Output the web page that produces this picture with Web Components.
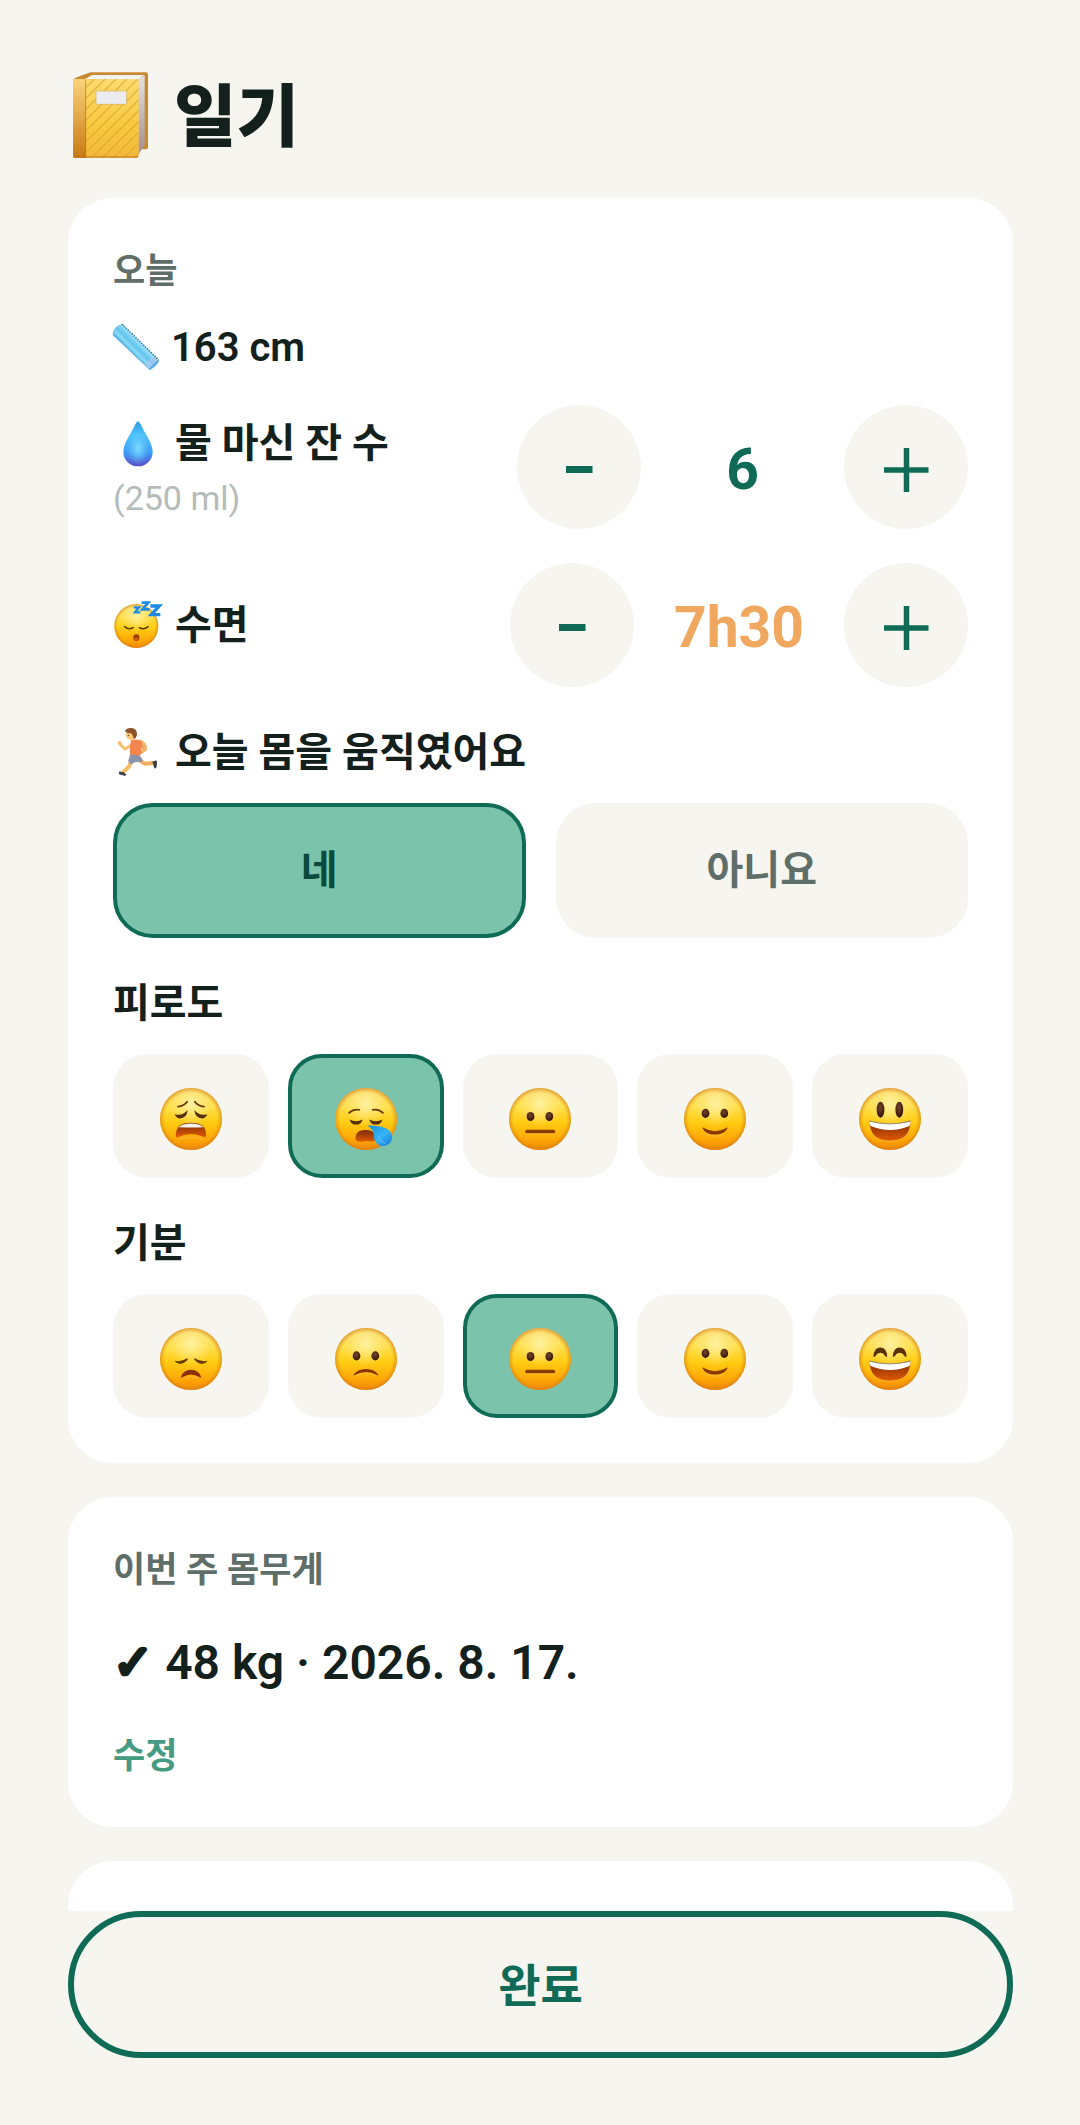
<!DOCTYPE html>
<html lang="ko">
<head>
<meta charset="utf-8">
<meta name="viewport" content="width=device-width, initial-scale=1">
<title>일기</title>
<style>
  :root {
    --bg: #f6f5f0;
    --card: #ffffff;
    --ink: #13201c;
    --muted: #5f6e68;
    --faint: #b4bcb9;
    --green: #0f6b55;
    --green-dark: #0a4b3b;
    --green-soft: #7cc3ab;
    --link: #459a82;
    --orange: #f0a860;
  }
  body {
    margin: 0;
    background: var(--bg);
    color: var(--ink);
    font-family: Roboto, "Noto Sans CJK KR", "DejaVu Sans", sans-serif;
    font-size: 40px;
    line-height: 56px;
  }
</style>
</head>
<body>
<diary-app>
  <diary-title slot="header" icon="book">일기</diary-title>

  <diary-card heading="오늘">
    <diary-label icon="ruler">163 cm</diary-label>
    <diary-steppers>
      <diary-stepper icon="drop" label="물 마신 잔 수" note="(250 ml)" value="6"></diary-stepper>
      <diary-stepper icon="sleeping" label="수면" value="7h30" tone="warn"></diary-stepper>
    </diary-steppers>
    <diary-field>
      <diary-label slot="label" icon="runner">오늘 몸을 움직였어요</diary-label>
      <diary-choices options="네,아니요" selected="0"></diary-choices>
    </diary-field>
    <diary-field>
      <diary-label slot="label">피로도</diary-label>
      <diary-moods icons="weary,sleepy,neutral,smile,happy" selected="1"></diary-moods>
    </diary-field>
    <diary-field>
      <diary-label slot="label">기분</diary-label>
      <diary-moods icons="sad,frown,neutral,smile,grin" selected="2"></diary-moods>
    </diary-field>
  </diary-card>

  <diary-card heading="이번 주 몸무게">
    <diary-weight edit="수정">48 kg · 2026. 8. 17.</diary-weight>
  </diary-card>

  <diary-card></diary-card>

  <diary-done slot="footer">완료</diary-done>
</diary-app>

<script>
// ========================================
// ICONS
// ========================================

// Shared yellow head, drawn on a 64x64 grid
const FACE_DEFS = `
  <defs>
    <linearGradient id="skin" x1="0" y1="0" x2="0" y2="1">
      <stop offset="0" stop-color="#fcdc6e"/>
      <stop offset=".3" stop-color="#ffe04e"/>
      <stop offset=".55" stop-color="#ffcc12"/>
      <stop offset=".8" stop-color="#fdab08"/>
      <stop offset="1" stop-color="#f58a06"/>
    </linearGradient>
    <radialGradient id="shine" cx=".5" cy=".26" r=".36">
      <stop offset="0" stop-color="#fff2a4"/>
      <stop offset="1" stop-color="#ffea80" stop-opacity="0"/>
    </radialGradient>
    <radialGradient id="rim" cx=".5" cy=".5" r=".5">
      <stop offset=".84" stop-color="#e08e14" stop-opacity="0"/>
      <stop offset="1" stop-color="#cf7414" stop-opacity=".6"/>
    </radialGradient>
    <linearGradient id="mouth" x1="0" y1="0" x2="0" y2="1">
      <stop offset="0" stop-color="#7c2a04"/>
      <stop offset="1" stop-color="#e25a06"/>
    </linearGradient>
    <radialGradient id="eye" cx=".45" cy=".35" r=".6">
      <stop offset="0" stop-color="#74452a"/>
      <stop offset="1" stop-color="#38170a"/>
    </radialGradient>
    <linearGradient id="tear" x1="0" y1="0" x2="1" y2="1">
      <stop offset="0" stop-color="#1a8fe0"/>
      <stop offset=".55" stop-color="#35b4f8"/>
      <stop offset="1" stop-color="#1577d2"/>
    </linearGradient>
  </defs>`;

const HEAD = `
  <circle cx="32" cy="32" r="32" fill="url(#skin)"/>
  <circle cx="32" cy="32" r="32" fill="url(#shine)"/>
  <circle cx="32" cy="32" r="32" fill="url(#rim)"/>`;

const face = (features) => `<svg viewBox="0 0 64 64" aria-hidden="true">${FACE_DEFS}${HEAD}${features}</svg>`;

const dots = (y, rx = 4, ry = 4.7) => `
  <ellipse cx="22.2" cy="${y}" rx="${rx}" ry="${ry}" fill="url(#eye)"/>
  <ellipse cx="41.6" cy="${y}" rx="${rx}" ry="${ry}" fill="url(#eye)"/>`;

const OPEN_SMILE = `
  <path d="M10.6 33.6Q32 39.6 53.4 33.6Q53.6 54.8 32 54.8Q10.4 54.8 10.6 33.6Z" fill="url(#mouth)" stroke="#ffc53d" stroke-width=".8"/>
  <path d="M10.9 34.2Q32 39.8 53.1 34.2Q53 37 52 39.2Q32 47.6 12 39.2Q11 37 10.9 34.2Z" fill="#fff"/>
  <path d="M10.9 34.2Q32 40 53.1 34.2" fill="none" stroke="#8a8a5a" stroke-width=".9"/>`;

const ICONS = {
  weary: face(`
    <g fill="none" stroke="#6b3a08" stroke-width="1.9" stroke-linecap="round">
      <path d="M18.6 19.2Q25 18.6 28 14.2"/><path d="M45.4 19.2Q39 18.6 36 14.2"/>
    </g>
    <g fill="#55300a">
      <path d="M15 27Q23 29.6 28.6 22.8Q27.6 31.4 20.6 31.4Q17 31.2 15 27Z"/>
      <path d="M49 27Q41 29.6 35.4 22.8Q36.4 31.4 43.4 31.4Q47 31.2 49 27Z"/>
    </g>
    <path d="M16.4 49.6Q15.6 35.8 32 35.8Q48.4 35.8 47.6 49.6Q47 51.8 44.6 50.2Q32 44.8 19.4 50.2Q17 51.8 16.4 49.6Z" fill="url(#mouth)"/>
    <path d="M19.2 40.6Q23 36.6 32 36.6Q41 36.6 44.8 40.6Q32 41.2 19.2 40.6Z" fill="#f4f2ee"/>
    <path d="M20 53Q32 48.4 44 53" fill="none" stroke="#ffb43c" stroke-width="1.2"/>`),

  sleepy: face(`
    <g fill="none" stroke="#6b3a08" stroke-width="1.9" stroke-linecap="round">
      <path d="M14.6 25.6Q19 21.6 25 22.6"/><path d="M49.4 25.6Q45 21.6 39 22.6"/>
    </g>
    <g fill="#55300a">
      <path d="M15 32.4Q21.8 36 28.6 32.4Q27 37.8 21.8 37.8Q16.6 37.8 15 32.4Z"/>
      <path d="M35.4 32.4Q42.2 36 49 32.4Q47.4 37.8 42.2 37.8Q37 37.8 35.4 32.4Z"/>
    </g>
    <path d="M21.2 53Q20.6 43.4 32 43.4Q42 43.4 42.8 53Q42 56 32 54.8Q22 56.8 21.2 53Z" fill="url(#mouth)"/>
    <path d="M33.4 38.8Q45 38.6 52.6 41.6Q59 45 59 51A9.4 9.4 0 0 1 40.4 52.4Q40.6 43 33.4 38.8Z" fill="url(#tear)"/>
    <path d="M45 49Q46 56 52 57" fill="none" stroke="#7fd6ff" stroke-width="1.2" opacity=".6"/>`),

  neutral: face(`${dots(29.4)}
    <rect x="16.8" y="43" width="30.8" height="3.8" rx="1.6" fill="#8a3a06"/>
    <path d="M18 47.6H46.4" stroke="#ffb83a" stroke-width="1"/>`),

  smile: face(`${dots(26.2)}
    <path d="M19 41.2Q20 40.4 21 41.6Q32 47.6 43 41.6Q44 40.4 45 41.2Q42 48 32 48Q22 48 19 41.2Z" fill="#8a3a06"/>
    <path d="M23 48Q32 51.4 41 48" fill="none" stroke="#ffbf40" stroke-width="1"/>`),

  happy: face(`${dots(22.4, 4, 8.2)}${OPEN_SMILE}`),

  grin: face(`
    <g fill="#5a3008">
      <path d="M14.8 29.4Q15.6 20 22 20Q28.4 20 29.2 29.4Q28 30.2 27 28.8Q25 25.6 22 25.6Q19 25.6 17 28.8Q16 30.2 14.8 29.4Z"/>
      <path d="M34.8 29.4Q35.6 20 42 20Q48.4 20 49.2 29.4Q48 30.2 47 28.8Q45 25.6 42 25.6Q39 25.6 37 28.8Q36 30.2 34.8 29.4Z"/>
    </g>${OPEN_SMILE}`),

  sad: face(`
    <g fill="#6b3f08">
      <path d="M15 33.8Q22 35.4 28.4 31Q29.2 32 28 33.4Q24.4 37.4 20 37Q16.4 36.4 15 33.8Z"/>
      <path d="M49 33.8Q42 35.4 35.6 31Q34.8 32 36 33.4Q39.6 37.4 44 37Q47.6 36.4 49 33.8Z"/>
    </g>
    <path d="M21.4 50.8Q24 43 32 43Q40 43 42.6 50.8Q42 51.6 40.6 50.6Q32 45.4 23.4 50.6Q22 51.6 21.4 50.8Z" fill="#8c2f04"/>
    <path d="M25 52.2Q32 48.6 39 52.2" fill="none" stroke="#ffb43c" stroke-width="1.1"/>`),

  frown: face(`${dots(28.8)}
    <path d="M19 48.6Q23 42.4 32 42.4Q41 42.4 45 48.6Q44.6 49.2 43.4 48.6Q32 42.4 20.6 48.6Q19.4 49.2 19 48.6Z" fill="#8c3404"/>
    <path d="M22 49.6Q32 44.6 42 49.6" fill="none" stroke="#ffc53d" stroke-width="1"/>`),

  sleeping: `<svg viewBox="0 0 150 150" aria-hidden="true">${FACE_DEFS}
    <g transform="translate(4 12) scale(2.06)">${HEAD}
      <g fill="none" stroke="#5a3a0a" stroke-width="2.2" stroke-linecap="round">
        <path d="M15 33Q21 38.4 27.4 34.4"/><path d="M36.6 34.4Q43 38.4 49 33"/>
      </g>
      <ellipse cx="32" cy="49" rx="4.4" ry="4.8" fill="#9a3a06"/>
      <ellipse cx="32" cy="51" rx="2.8" ry="2.4" fill="#d85a0a"/>
    </g>
    <g fill="none" stroke="#1c8ae6" stroke-linejoin="miter">
      <path d="M62 22H78L66 37H82" stroke-width="7"/>
      <path d="M86 8H106L88 28H110" stroke-width="8"/>
      <path d="M112 18H139L115 44H142" stroke-width="10"/>
    </g>
  </svg>`,

  drop: `<svg viewBox="0 0 150 150" aria-hidden="true">
    <defs>
      <linearGradient id="water" x1="0" y1="0" x2="0" y2="1">
        <stop offset="0" stop-color="#2f9ce4"/>
        <stop offset=".3" stop-color="#4cc4fb"/>
        <stop offset=".7" stop-color="#3f9cf6"/>
        <stop offset="1" stop-color="#5a50c8"/>
      </linearGradient>
      <radialGradient id="gloss" cx=".5" cy=".6" r=".36">
        <stop offset="0" stop-color="#7fdcff"/>
        <stop offset="1" stop-color="#6cd2ff" stop-opacity="0"/>
      </radialGradient>
    </defs>
    <path d="M75 10Q80 12 84 20C96 48 119 74 119 102A44 43 0 0 1 31 102C31 74 54 48 66 20Q70 12 75 10Z" fill="url(#water)"/>
    <path d="M75 10Q80 12 84 20C96 48 119 74 119 102A44 43 0 0 1 31 102C31 74 54 48 66 20Q70 12 75 10Z" fill="url(#gloss)"/>
  </svg>`,

  runner: `<svg viewBox="0 0 150 150" aria-hidden="true">
    <g fill="none" stroke-linecap="round" stroke-linejoin="round">
      <path d="M82 50L96 68L80 80" stroke="#eaa458" stroke-width="9"/>
      <path d="M78 100L96 110L118 108" stroke="#f0b060" stroke-width="12"/>
      <path d="M58 98L48 118L32 134" stroke="#f7bb66" stroke-width="12"/>
      <path d="M52 56L36 66L22 52" stroke="#f9c070" stroke-width="9"/>
      <path d="M82 42Q98 50 98 66L90 72" stroke="#f4b468" stroke-width="9"/>
    </g>
    <circle cx="20" cy="48" r="6" fill="#f9c070"/>
    <path d="M54 40Q76 34 86 44Q90 56 80 88L52 86Q48 66 54 40Z" fill="#f5854f"/>
    <path d="M52 82L80 86Q92 96 88 104L66 106L54 112Q44 104 46 100Z" fill="#8b93a6"/>
    <path d="M18 134Q30 132 40 142Q40 147 34 146L18 142Z" fill="#3c3f49"/>
    <path d="M118 104L130 100Q134 106 130 122Q124 128 122 118Z" fill="#3c3f49"/>
    <circle cx="54" cy="24" r="15" fill="#fac676"/>
    <path d="M36 12Q40 2 56 3Q74 6 72 24Q70 34 62 36Q60 22 52 18Q40 20 36 12Z" fill="#8a5226"/>
    <circle cx="46" cy="25" r="2" fill="#4a2a12"/>
  </svg>`,

  ruler: `<svg viewBox="0 0 138 138" aria-hidden="true">
    <defs>
      <linearGradient id="plastic" x1="0" y1="1" x2="1" y2="0">
        <stop offset=".38" stop-color="#3fa9de"/>
        <stop offset=".44" stop-color="#8fdcf7"/>
        <stop offset=".5" stop-color="#5fc4ee"/>
        <stop offset=".6" stop-color="#a4e2fa"/>
      </linearGradient>
    </defs>
    <path d="M1 26Q4 8 28 1L137 108Q136 124 110 137L1 34Z" fill="url(#plastic)" stroke="#54aede" stroke-width="2"/>
    <path d="M110 137L94 122L122 96L137 108Q136 124 110 137Z" fill="#a9c5f0" opacity=".7"/>
    <path d="M28 1L137 108" stroke="#316a80" stroke-width="5" stroke-dasharray="3 5"/>
    <path d="M110 136L136 110" stroke="#3aa2ec" stroke-width="4"/>
  </svg>`,

  book: `<svg viewBox="0 0 258 258" aria-hidden="true">
    <defs>
      <linearGradient id="spine" x1="0" y1="0" x2="0" y2="1">
        <stop offset="0" stop-color="#fbd27a"/>
        <stop offset="1" stop-color="#c87a12"/>
      </linearGradient>
      <linearGradient id="cover" x1="0" y1="0" x2="0" y2="1">
        <stop offset="0" stop-color="#fcdc70"/>
        <stop offset=".6" stop-color="#f8c93e"/>
        <stop offset="1" stop-color="#f4b83a"/>
      </linearGradient>
      <linearGradient id="pages" x1="0" y1="0" x2="0" y2="1">
        <stop offset="0" stop-color="#e4e2e2"/>
        <stop offset="1" stop-color="#a48d8e"/>
      </linearGradient>
      <pattern id="stripes" width="23" height="23" patternUnits="userSpaceOnUse" patternTransform="rotate(45)">
        <path d="M2 0V23" stroke="#dba42e" stroke-width="3"/>
      </pattern>
    </defs>
    <path d="M15 24Q16 18 60 4Q64 1 70 1H234Q240 1 240 8V226Q240 232 234 232H216L212 24Z" fill="#c98a34"/>
    <path d="M50 22L72 9H228L212 24Z" fill="#f4f2ec"/>
    <path d="M211 24L230 9V218L211 248Z" fill="url(#pages)"/>
    <path d="M15 22H212V252Q212 257 207 257H20Q15 257 15 252Z" fill="url(#cover)"/>
    <path d="M53 22H212V257H53Z" fill="url(#stripes)"/>
    <path d="M15 22H54V257H20Q15 257 15 252Z" fill="url(#spine)"/>
    <path d="M53 24V257" stroke="#b9740e" stroke-width="2"/>
    <path d="M16 255H210" stroke="#bf6d14" stroke-width="3"/>
    <rect x="84" y="57" width="92" height="40" rx="3" fill="#ececf0" stroke="#d6ae5c" stroke-width="2"/>
  </svg>`,

  minus: `<svg viewBox="0 0 48 48" aria-hidden="true"><path d="M11 26.5H37.5" stroke="currentColor" stroke-width="7"/></svg>`,
  plus: `<svg viewBox="0 0 48 48" aria-hidden="true"><path d="M2 27H46.5M24.5 5V49" stroke="currentColor" stroke-width="5.5"/></svg>`
};

// ========================================
// BASE
// ========================================

class DiaryElement extends HTMLElement {
  constructor() {
    super();
    this.attachShadow({ mode: 'open' });
  }

  connectedCallback() {
    this.render();
  }

  attr(name) {
    return this.getAttribute(name) || '';
  }

  list(name) {
    return this.attr(name).split(',');
  }
}

// <diary-icon name="drop">
class DiaryIcon extends DiaryElement {
  render() {
    this.shadowRoot.innerHTML = `
      <style>
        :host { display: inline-block; flex: none; width: 50px; height: 50px; }
        svg { display: block; width: 100%; height: 100%; overflow: visible; }
      </style>
      ${ICONS[this.attr('name')] || ''}
    `;
  }
}

// Scrolling page with a footer pinned under it
class DiaryApp extends DiaryElement {
  render() {
    this.shadowRoot.innerHTML = `
      <style>
        :host {
          display: flex;
          flex-direction: column;
          height: 100vh;
          box-sizing: border-box;
          padding: 0 67px 67px 68px;
        }
        main {
          flex: 1;
          min-height: 0;
          display: flex;
          flex-direction: column;
          gap: 34px;
          overflow-y: auto;
          scrollbar-width: none;
        }
      </style>
      <main>
        <slot name="header"></slot>
        <slot></slot>
      </main>
      <slot name="footer"></slot>
    `;
  }
}

class DiaryTitle extends DiaryElement {
  render() {
    this.shadowRoot.innerHTML = `
      <style>
        :host { display: block; flex: none; padding: 72px 0 6px; }
        h1 {
          display: flex;
          align-items: center;
          gap: 20px;
          margin: 0;
          font-size: 68px;
          font-weight: 900;
          line-height: 80px;
        }
        span { padding-top: 6px; }
        diary-icon { width: 86px; height: 86px; }
      </style>
      <h1><diary-icon name="${this.attr('icon')}"></diary-icon><span><slot></slot></span></h1>
    `;
  }
}

class DiaryCard extends DiaryElement {
  render() {
    const heading = this.attr('heading');
    this.shadowRoot.innerHTML = `
      <style>
        :host { display: block; flex: none; }
        section {
          display: flex;
          flex-direction: column;
          min-height: 240px;
          padding: 45px;
          border-radius: 45px;
          background: var(--card);
          box-sizing: border-box;
        }
        h2 {
          margin: 0 0 18px;
          color: var(--muted);
          font-size: 35px;
          font-weight: 700;
          line-height: 58px;
        }
      </style>
      <section>
        ${heading ? `<h2>${heading}</h2>` : ''}
        <slot></slot>
      </section>
    `;
  }
}

class DiaryLabel extends DiaryElement {
  render() {
    const icon = this.attr('icon');
    this.shadowRoot.innerHTML = `
      <style>
        :host { display: flex; align-items: center; gap: 12px; font-weight: 600; line-height: 54px; }
        span { padding-top: 2px; }
        diary-icon[name="ruler"] { width: 46px; height: 46px; }
      </style>
      ${icon ? `<diary-icon name="${icon}"></diary-icon>` : ''}
      <span><slot></slot></span>
    `;
  }
}

class DiarySteppers extends DiaryElement {
  render() {
    this.shadowRoot.innerHTML = `
      <style>
        :host { display: flex; flex-direction: column; gap: 34px; margin-top: 30px; }
      </style>
      <slot></slot>
    `;
  }
}

class DiaryStepper extends DiaryElement {
  render() {
    const label = this.attr('label');
    const note = this.attr('note');
    this.shadowRoot.innerHTML = `
      <style>
        :host { display: flex; align-items: center; justify-content: space-between; }
        .note { color: var(--faint); font-size: 34px; line-height: 54px; }
        .controls { display: flex; align-items: center; gap: 40px; }
        button {
          display: flex;
          align-items: center;
          justify-content: center;
          width: 124px;
          height: 124px;
          padding: 0;
          border: 0;
          border-radius: 50%;
          background: var(--bg);
          color: var(--green);
        }
        button diary-icon { width: 48px; height: 48px; }
        output {
          min-width: 123px;
          padding-top: 6px;
          color: var(--green);
          font-size: 57px;
          font-weight: 700;
          text-align: center;
        }
        :host([tone="warn"]) output { color: var(--orange); }
        :host([note]) .text { padding-top: 6px; }
      </style>
      <div class="text">
        <diary-label icon="${this.attr('icon')}">${label}</diary-label>
        ${note ? `<div class="note">${note}</div>` : ''}
      </div>
      <div class="controls" role="group" aria-label="${label}">
        <button type="button" aria-label="${label} 줄이기"><diary-icon name="minus"></diary-icon></button>
        <output>${this.attr('value')}</output>
        <button type="button" aria-label="${label} 늘리기"><diary-icon name="plus"></diary-icon></button>
      </div>
    `;
  }
}

class DiaryField extends DiaryElement {
  render() {
    this.shadowRoot.innerHTML = `
      <style>
        :host { display: flex; flex-direction: column; gap: 23px; margin-top: 37px; }
      </style>
      <slot name="label"></slot>
      <slot></slot>
    `;
  }
}

const OPTION_STYLE = `
  :host { display: flex; }
  button {
    flex: 1 1 0;
    display: flex;
    align-items: center;
    justify-content: center;
    min-width: 0;
    border: 4px solid var(--bg);
    background: var(--bg);
    color: var(--muted);
    font: inherit;
    font-weight: 600;
  }
  button[aria-pressed="true"] {
    border-color: var(--green);
    background: var(--green-soft);
    color: var(--green-dark);
  }`;

// Pressing an option moves the highlight to it
const bindOptions = (root) => {
  const buttons = [...root.querySelectorAll('button')];
  buttons.forEach((button) => {
    button.addEventListener('click', () => {
      buttons.forEach((b) => b.setAttribute('aria-pressed', String(b === button)));
    });
  });
};

class DiaryChoices extends DiaryElement {
  render() {
    const selected = Number(this.attr('selected'));
    this.shadowRoot.innerHTML = `
      <style>
        ${OPTION_STYLE}
        :host { gap: 30px; }
        button { padding: 36px 20px 35px; border-radius: 40px; }
      </style>
      ${this.list('options').map((text, i) => `
        <button type="button" aria-pressed="${i === selected}">${text}</button>`).join('')}
    `;
    bindOptions(this.shadowRoot);
  }
}

class DiaryMoods extends DiaryElement {
  render() {
    const selected = Number(this.attr('selected'));
    this.shadowRoot.innerHTML = `
      <style>
        ${OPTION_STYLE}
        :host { gap: 19px; }
        button { padding: 30px 0 24px; border-radius: 34px; }
        diary-icon { width: 62px; height: 62px; }
      </style>
      ${this.list('icons').map((name, i) => `
        <button type="button" aria-label="${i + 1}" aria-pressed="${i === selected}"><diary-icon name="${name}"></diary-icon></button>`).join('')}
    `;
    bindOptions(this.shadowRoot);
  }
}

class DiaryWeight extends DiaryElement {
  render() {
    this.shadowRoot.innerHTML = `
      <style>
        :host { display: flex; flex-direction: column; align-items: flex-start; gap: 39px; margin-top: 14px; }
        p { margin: 0; font-size: 48px; font-weight: 600; line-height: 60px; }
        .check {
          font-family: "DejaVu Sans", sans-serif;
          font-weight: 700;
          -webkit-text-stroke: 4px currentColor;
        }
        button {
          padding: 0;
          border: 0;
          background: none;
          color: var(--link);
          font: inherit;
          font-size: 35px;
          font-weight: 600;
          line-height: 50px;
        }
      </style>
      <p><span class="check">✓</span> <slot></slot></p>
      <button type="button">${this.attr('edit')}</button>
    `;
  }
}

class DiaryDone extends DiaryElement {
  render() {
    this.shadowRoot.innerHTML = `
      <style>
        :host { display: block; flex: none; }
        button {
          width: 100%;
          padding: 41px 40px 38px;
          border: 6px solid var(--green);
          border-radius: 80px;
          background: var(--bg);
          color: var(--green);
          font: inherit;
          font-size: 46px;
          font-weight: 700;
        }
      </style>
      <button type="button"><slot></slot></button>
    `;
  }
}

customElements.define('diary-icon', DiaryIcon);
customElements.define('diary-app', DiaryApp);
customElements.define('diary-title', DiaryTitle);
customElements.define('diary-card', DiaryCard);
customElements.define('diary-label', DiaryLabel);
customElements.define('diary-steppers', DiarySteppers);
customElements.define('diary-stepper', DiaryStepper);
customElements.define('diary-field', DiaryField);
customElements.define('diary-choices', DiaryChoices);
customElements.define('diary-moods', DiaryMoods);
customElements.define('diary-weight', DiaryWeight);
customElements.define('diary-done', DiaryDone);
</script>
</body>
</html>
